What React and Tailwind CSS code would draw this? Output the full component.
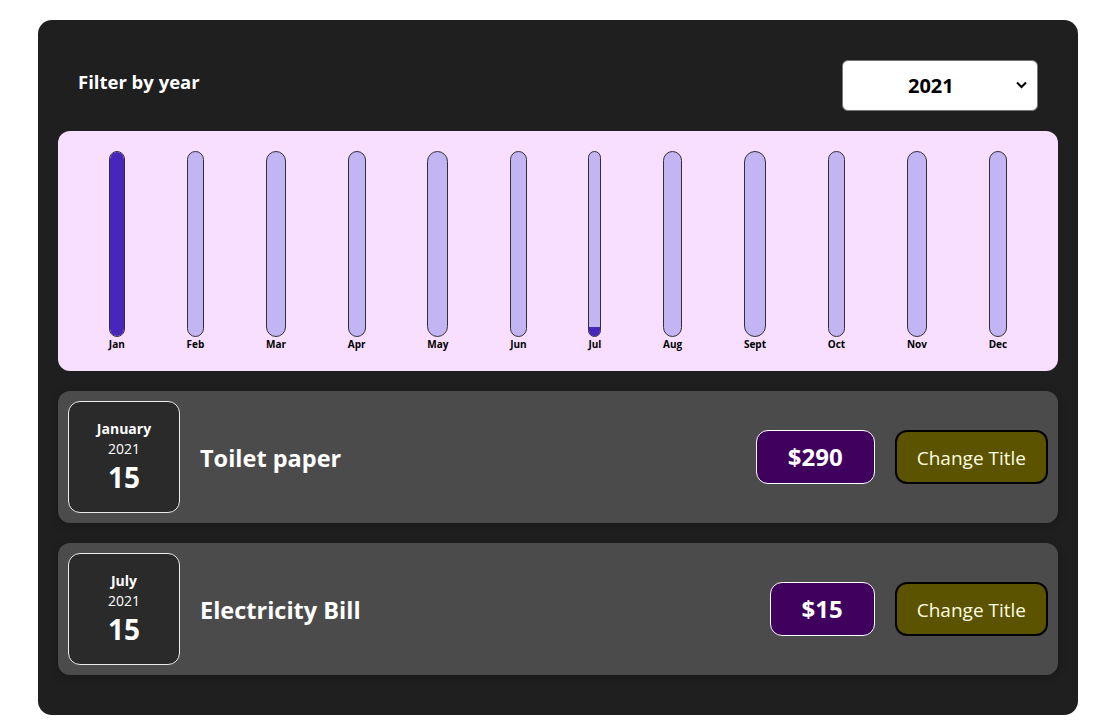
import React, { useState } from 'react'

const months = ['Jan', 'Feb', 'Mar', 'Apr', 'May', 'Jun', 'Jul', 'Aug', 'Sept', 'Oct', 'Nov', 'Dec']

const expenses = [
  { id: 'e1', title: 'Toilet paper', amount: 290, month: 'January', year: 2021, day: 15, m: 0 },
  { id: 'e2', title: 'Electricity Bill', amount: 15, month: 'July', year: 2021, day: 15, m: 6 },
]

// 图表柱子
function ChartBar({ label, percent }) {
  return (
    <div className="h-full flex flex-col items-center">
      <div className="h-full w-full border border-[#313131] rounded-[12px] bg-[#c3b4f3] overflow-hidden flex flex-col justify-end">
        <div className="bg-[#4826b9] w-full" style={{ height: `${percent}%` }} />
      </div>
      <div className="font-bold text-[10px] leading-[14px] text-center text-black">{label}</div>
    </div>
  )
}

function ExpenseDate({ month, year, day }) {
  return (
    <div className="flex flex-col w-[112px] h-[112px] border border-[#ececec] bg-[#2a2a2a] text-white rounded-[12px] items-center justify-center shrink-0">
      <div className="text-[14px] font-bold leading-[20px]">{month}</div>
      <div className="text-[14px] leading-[20px]">{year}</div>
      <div className="text-[28px] font-bold leading-[36px]">{day}</div>
    </div>
  )
}

function ExpenseItem({ item }) {
  return (
    <div className="flex items-center bg-[#4b4b4b] rounded-[12px] p-[10px] shadow-[0_2px_8px_rgba(0,0,0,0.25)]">
      <ExpenseDate month={item.month} year={item.year} day={item.day} />
      <h2 className="flex-1 mx-[20px] text-white text-[23.5px] font-bold pt-[3px]">{item.title}</h2>
      <div className="text-white text-[24px] font-bold bg-[#40005d] border border-white rounded-[12px] px-[31px] py-[9px] leading-[34px]">
        ${item.amount}
      </div>
      <button className="ml-[20px] bg-[#5c5300] text-[#fffde0] border-2 border-black rounded-[12px] px-[20px] h-[54px] text-[19px] pt-[2px]">
        Change Title
      </button>
    </div>
  )
}

export default function App() {
  const [year, setYear] = useState('2021')
  const max = Math.max(...expenses.map((e) => e.amount))
  const totals = months.map((_, i) =>
    expenses.filter((e) => e.m === i).reduce((s, e) => s + e.amount, 0)
  )

  return (
    <div className="min-h-screen bg-white pt-[20px] font-['Open_Sans','Noto_Sans',sans-serif]">
      <div className="w-[1040px] ml-[38px] bg-[#1f1f1f] rounded-[14px] p-[20px]">
        <div className="text-white px-[20px]">
          <div className="flex w-full items-center justify-between my-[20px]">
            <label className="font-bold text-[18.5px] -mt-[7px]">Filter by year</label>
            <div className="relative">
              <select
                value={year}
                onChange={(e) => setYear(e.target.value)}
                className="appearance-none bg-white text-black font-bold text-[20px] leading-[29px] py-[10px] pl-[65px] w-[196px] text-left rounded-[6px] border border-[#767676]"
              >
                <option value="2022">2022</option>
                <option value="2021">2021</option>
                <option value="2020">2020</option>
                <option value="2019">2019</option>
              </select>
              <svg className="absolute right-[11px] top-[21px] pointer-events-none" width="11" height="8" viewBox="0 0 11 8">
                <path d="M1 1.5 L5.5 6 L10 1.5" stroke="#000" strokeWidth="2" fill="none" />
              </svg>
            </div>
          </div>
        </div>

        <div className="p-[20px] rounded-[12px] bg-[#f8dfff] flex justify-around h-[240px]">
          {months.map((m, i) => (
            <ChartBar key={m} label={m} percent={max ? Math.round((totals[i] / max) * 100) : 0} />
          ))}
        </div>

        <div className="flex flex-col gap-[20px] my-[20px]">
          {expenses.map((e) => (
            <ExpenseItem key={e.id} item={e} />
          ))}
        </div>
      </div>
    </div>
  )
}
